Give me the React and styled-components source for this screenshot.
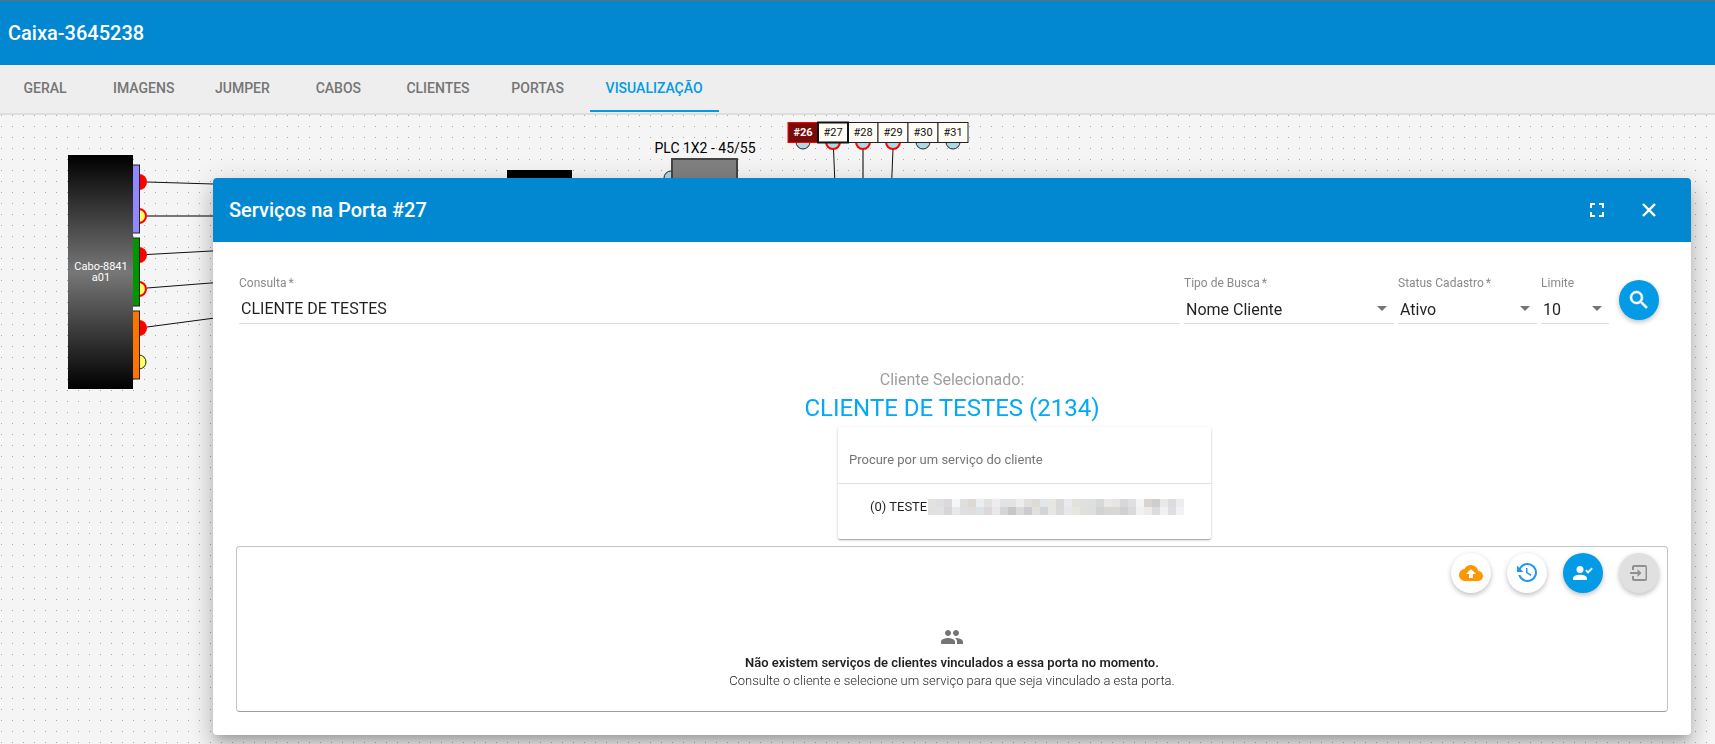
import React from "react";
import styled, { createGlobalStyle, css } from "styled-components";
import { MdCloudUpload, MdFullscreen, MdPeople } from "react-icons/md";

const GlobalStyle = createGlobalStyle`
  *, *::before, *::after { box-sizing: border-box; }
  body {
    margin: 0;
    font-family: Roboto, "Liberation Sans", sans-serif;
    color: rgba(0, 0, 0, 0.87);
    background: #f5f5f5;
  }
  button, input, select { font-family: inherit; }
`;

const Page = styled.div`
  display: flex;
  flex-direction: column;
  height: 100vh;
  overflow: hidden;
  border-top: 1px solid #6b6b6b;
`;

const Toolbar = styled.header`
  display: flex;
  align-items: center;
  flex: none;
  height: 64px;
  padding: 0 ${(p) => p.$pad}px;
  color: #fff;
  background: #0288d1;
`;

const Title = styled.h1`
  flex: 1;
  margin: 0;
  font-size: 20px;
  font-weight: 500;
  line-height: 24px;
`;

const Tabs = styled.nav`
  display: flex;
  flex: none;
  gap: 8px;
  height: 50px;
  padding: 0 1px 1px;
  background: #eee;
  border-bottom: 2px solid #dedede;
`;

const Tab = styled.button`
  min-width: 88px;
  padding: 0 16px;
  border: 0;
  border-bottom: 2px solid ${(p) => (p.$active ? "#039be5" : "transparent")};
  background: none;
  color: ${(p) => (p.$active ? "#039be5" : "#757575")};
  font-size: 14px;
  font-weight: 500;
  text-transform: uppercase;
  cursor: pointer;
`;

const Canvas = styled.main`
  flex: 1;
  min-height: 0;
  background: #f5f5f5;
`;

const Diagram = styled.svg`
  display: block;
  width: 100%;
  height: 100%;
  font-family: Roboto, "Liberation Sans", sans-serif;
`;

const Overlay = styled.div`
  position: fixed;
  inset: 0;
  display: flex;
  align-items: flex-start;
  padding: 178px 24px 9px 213px;
`;

const Dialog = styled.section`
  flex: 1;
  min-width: 0;
  overflow: hidden;
  border-radius: 4px;
  background: #fff;
  box-shadow: 0 7px 9px -4px rgba(0, 0, 0, 0.2), 0 14px 21px 2px rgba(0, 0, 0, 0.14),
    0 5px 26px 4px rgba(0, 0, 0, 0.12);
`;

const ToolbarActions = styled.div`
  display: flex;
  gap: 12px;
  padding-right: 6px;
`;

const IconButton = styled.button`
  display: grid;
  place-items: center;
  width: 40px;
  height: 40px;
  padding: 0;
  border: 0;
  background: none;
  color: #fff;
  cursor: pointer;
`;

const DialogBody = styled.div`
  padding: 32px 23px 23px;
`;

const SearchForm = styled.form`
  display: flex;
  align-items: flex-start;
  gap: 4px;
  padding: 0 9px 0 3px;
`;

const Field = styled.div`
  position: relative;
  display: flex;
  flex-direction: column;
  ${(p) => (p.$width ? css`flex: 0 0 ${p.$width}px;` : css`flex: 1;`)}
`;

const Label = styled.label`
  font-size: 12px;
  line-height: 18px;
  color: #8a8a8a;
`;

const Required = styled.span`
  margin-left: 2px;
`;

const control = css`
  width: 100%;
  height: 32px;
  border: 0;
  border-bottom: 1px solid #dedede;
  border-radius: 0;
  outline: 0;
  background: none;
  color: rgba(0, 0, 0, 0.87);
  font-size: 16px;
`;

const TextInput = styled.input`
  ${control}
  padding: 2px 2px 0;
`;

const Select = styled.select`
  ${control}
  padding: 4px 2px 0;
  appearance: none;
`;

const Arrow = styled.svg`
  position: absolute;
  right: 7px;
  bottom: 13px;
  pointer-events: none;
`;

const fabColors = {
  primary: css`background: #039be5; color: #fff;`,
  upload: css`background: #fff; color: #ff9800;`,
  history: css`background: #fff; color: #2196f3;`,
  disabled: css`background: #e0e0e0; color: #8f8f8f;`,
};

const Fab = styled.button`
  display: grid;
  place-items: center;
  flex: none;
  width: 40px;
  height: 40px;
  padding: 0;
  border: 0;
  border-radius: 50%;
  box-shadow: 0 2px 5px rgba(0, 0, 0, 0.26);
  cursor: pointer;
  ${(p) => fabColors[p.$tone]}
`;

const SearchFab = styled(Fab)`
  margin: 6px 0 0 6px;
`;

const Selected = styled.div`
  display: flex;
  flex-direction: column;
  align-items: center;
  padding-top: 45px;
`;

const SelectedLabel = styled.p`
  margin: 0;
  font-size: 16px;
  line-height: 22px;
  color: #9e9e9e;
`;

const SelectedName = styled.h2`
  margin: 0 0 2px;
  font-size: 24px;
  font-weight: 400;
  line-height: 34px;
  color: #03a9f4;
`;

const ServiceCard = styled.div`
  width: 373px;
  margin: 0 0 7px 145px;
  border-radius: 2px;
  background: #fff;
  box-shadow: 0 1px 3px rgba(0, 0, 0, 0.2), 0 1px 1px rgba(0, 0, 0, 0.14),
    0 2px 1px -1px rgba(0, 0, 0, 0.12);
`;

const ServiceFilter = styled.input`
  display: block;
  width: 100%;
  height: 57px;
  padding: 8px 11px 0;
  border: 0;
  border-bottom: 1px solid #e0e0e0;
  outline: 0;
  background: none;
  font-size: 13px;
  &::placeholder { color: #757575; }
`;

const ServiceItem = styled.button`
  display: flex;
  align-items: center;
  gap: 1px;
  width: 100%;
  height: 55px;
  padding: 0 0 10px 32px;
  border: 0;
  background: none;
  color: rgba(0, 0, 0, 0.87);
  font-size: 13px;
  cursor: pointer;
`;

const LinkedPanel = styled.section`
  height: 166px;
  padding: 6px 8px;
  border: 1px solid #c4c4c4;
  border-bottom-color: #9e9e9e;
  border-radius: 4px;
`;

const PanelActions = styled.div`
  display: flex;
  justify-content: flex-end;
  gap: 16px;
`;

const EmptyState = styled.div`
  display: flex;
  flex-direction: column;
  align-items: center;
  padding-top: 32px;
  color: #757575;
`;

const EmptyText = styled.p`
  margin: 0;
  font-size: 13px;
  line-height: 18px;
  font-weight: ${(p) => (p.$strong ? 600 : 300)};
  color: rgba(0, 0, 0, 0.87);
  padding-top: ${(p) => (p.$strong ? 5 : 0)}px;
`;

const tabs = ["Geral", "Imagens", "Jumper", "Cabos", "Clientes", "Portas", "Visualização"];

const maskRows = [
  "e2e2e2 dedee1 dcd8dc f4f6fa dedede dcd8d2 e9eeef e2e2e2 efecee e1e4e4 e2e4e2 ededed e2dfdf dedad6 e2e6ea e6e6e2 d9d9d9 e8eaf0 e2e2dc dfe1e1 dcdfdf d6d9d6 e9e9e9 e8e4e2 d7d7d9 dfdfe3 f4f4f4 d8d4d0 cecece e9e9e7 dadddb ededf0",
  "e3e0df e0e1e4 d6d6da e8e8e8 dedfe0 e0dcd9 dde2e6 dcd8d9 e8e8ea d5d5d7 c7c7c9 dadadc cfcacf e2e0da d1d5d8 e5e7e4 dadad8 e6e7eb e5e6e0 dfe0da dddfdd d1d3d1 d7d7d3 d8d8d4 cfd0d3 dadada f1f1f3 eeeae6 dedbe0 f0f0f2 dfdfe1 f1f2f5",
].map((row) => row.split(" "));

const ports = [
  { id: 26, state: "alert" },
  { id: 27, state: "selected", linked: true },
  { id: 28, linked: true },
  { id: 29, linked: true },
  { id: 30 },
  { id: 31 },
];

const tubes = [
  { y: 50, color: "#9187ff", linked: true },
  { y: 123, color: "#009600", linked: true },
  { y: 196, color: "#ff7300", linked: false },
];

function Icon({ path, size = 24, stroke = 0 }) {
  return (
    <svg
      width={size}
      height={size}
      viewBox="0 0 24 24"
      fill="currentColor"
      stroke="currentColor"
      strokeWidth={stroke}
      aria-hidden="true"
    >
      <path d={path} />
    </svg>
  );
}

const closePath = "M6 6L18 18M18 6L6 18";
const searchPath =
  "M9.5,3A6.5,6.5 0 0,1 16,9.5C16,11.11 15.41,12.59 14.44,13.73L14.71,14H15.5L20.5,19L19,20.5L14,15.5V14.71L13.73,14.44C12.59,15.41 11.11,16 9.5,16A6.5,6.5 0 0,1 3,9.5A6.5,6.5 0 0,1 9.5,3M9.5,5C7,5 5,7 5,9.5C5,12 7,14 9.5,14C12,14 14,12 14,9.5C14,7 12,5 9.5,5Z";
const historyPath =
  "M11,7V12.11L15.71,14.9L16.5,13.62L12.5,11.25V7M12.5,2C8.97,2 5.91,3.92 4.27,6.77L2,4.5V11H8.5L5.75,8.25C6.96,5.73 9.5,4 12.5,4A7.5,7.5 0 0,1 20,11.5A7.5,7.5 0 0,1 12.5,19C9.23,19 6.47,16.91 5.44,14H3.34C4.44,18.03 8.11,21 12.5,21C17.74,21 22,16.75 22,11.5A9.5,9.5 0 0,0 12.5,2Z";
const accountCheckPath =
  "M9,5A3.5,3.5 0 0,1 12.5,8.5A3.5,3.5 0 0,1 9,12A3.5,3.5 0 0,1 5.5,8.5A3.5,3.5 0 0,1 9,5M9,13.75C12.87,13.75 16,15.32 16,17.25V19H2V17.25C2,15.32 5.13,13.75 9,13.75M17,12.66L14.25,9.66L15.41,8.5L17,10.09L20.59,6.5L21.75,7.91L17,12.66Z";
const enterPath =
  "M18,4H7A2,2 0 0,0 5,6V9H7V6H18.5V18H7V15H5V18A2,2 0 0,0 7,20H18A2,2 0 0,0 20,18V6A2,2 0 0,0 18,4M10.5,16L14.5,12L10.5,8V11H3V13H10.5V16Z";

function NetworkDiagram() {
  return (
    <Diagram role="img" aria-label="Diagrama da caixa">
      <defs>
        <pattern id="dots" width="11" height="11" patternUnits="userSpaceOnUse">
          <rect x="1" y="0" width="1" height="1" fill="#a6a6a6" />
        </pattern>
        <linearGradient id="cable" x1="0" y1="0" x2="0" y2="1">
          <stop offset="0" stopColor="#000" />
          <stop offset="0.5" stopColor="#777" />
          <stop offset="1" stopColor="#000" />
        </linearGradient>
      </defs>
      <rect width="100%" height="100%" fill="url(#dots)" />

      <g stroke="#111" strokeWidth="1">
        <path d="M147 67L230 69.500" />
        <path d="M147 101H230" stroke="#777" strokeWidth="2" />
        <path d="M147 139.500L230 135" />
        <path d="M147 173L230 166.500" />
        <path d="M147 212L230 201" />
        <path d="M833.500 34L835 70" />
        <path d="M863 34V70" stroke="#777" strokeWidth="2" />
        <path d="M893 34L891.500 70" />
      </g>

      {tubes.map((t) => (
        <g key={t.y}>
          <circle cx="139" cy={t.y + 17} r="8" fill="#f00" />
          <circle
            cx="139"
            cy={t.y + 51}
            r="7"
            fill="#ffff66"
            stroke={t.linked ? "#f00" : "#222"}
            strokeWidth={t.linked ? 2 : 1}
          />
          <rect x="130.500" y={t.y} width="9" height="68" fill={t.color} stroke="#222" />
        </g>
      ))}
      <rect x="68" y="40" width="65" height="234" fill="url(#cable)" />
      <g fill="#fff" fontSize="11" textAnchor="middle">
        <text x="101" y="155">Cabo-8841</text>
        <text x="101" y="166">a01</text>
      </g>

      <rect x="507" y="55" width="65" height="60" fill="#000" />
      <circle cx="671" cy="63" r="7" fill="#add8e6" stroke="#222" />
      <rect x="672" y="44" width="65" height="60" fill="#808080" stroke="#444" strokeWidth="2" />
      <text x="705" y="38" fontSize="14" textAnchor="middle" fill="#000">
        PLC 1X2 - 45/55
      </text>

      {ports.map((p, i) => {
        const x = 788 + i * 30;
        const alert = p.state === "alert";
        return (
          <g key={p.id}>
            <circle
              cx={x + 15}
              cy="27"
              r="7"
              fill="#add8e6"
              stroke={p.linked ? "#f00" : "#222"}
              strokeWidth={p.linked ? 2 : 1}
            />
            <rect
              x={x}
              y="7.500"
              width="30"
              height="20"
              fill={alert ? "#780a0a" : "#fffcf5"}
              stroke={alert ? "#f00" : "#222"}
            />
            <text
              x={x + 15}
              y="21"
              fontSize="11"
              fontWeight={alert ? 700 : 400}
              textAnchor="middle"
              fill={alert ? "#fff" : "#111"}
            >
              #{p.id}
            </text>
          </g>
        );
      })}
      <rect x="818" y="7.500" width="30" height="20" fill="none" stroke="#111" strokeWidth="2" />
    </Diagram>
  );
}

function FieldLabel({ htmlFor, required, children }) {
  return (
    <Label htmlFor={htmlFor}>
      {children}
      {required && <Required>*</Required>}
    </Label>
  );
}

function SelectField({ id, label, required, value, width }) {
  return (
    <Field $width={width}>
      <FieldLabel htmlFor={id} required={required}>
        {label}
      </FieldLabel>
      <Select id={id} defaultValue={value}>
        <option>{value}</option>
      </Select>
      <Arrow width="10" height="5" viewBox="0 0 10 5" aria-hidden="true">
        <path d="M0 0H10L5 5Z" fill="#757575" />
      </Arrow>
    </Field>
  );
}

export default function App() {
  return (
    <>
      <GlobalStyle />
      <Page>
        <Toolbar $pad={8}>
          <Title>Caixa-3645238</Title>
        </Toolbar>
        <Tabs>
          {tabs.map((t) => (
            <Tab key={t} type="button" $active={t === "Visualização"}>
              {t}
            </Tab>
          ))}
        </Tabs>
        <Canvas>
          <NetworkDiagram />
        </Canvas>
      </Page>

      <Overlay>
        <Dialog role="dialog" aria-labelledby="dialog-title">
          <Toolbar as="div" $pad={16}>
            <Title as="h2" id="dialog-title">
              Serviços na Porta #27
            </Title>
            <ToolbarActions>
              <IconButton type="button" aria-label="Tela cheia">
                <MdFullscreen size={24} />
              </IconButton>
              <IconButton type="button" aria-label="Fechar">
                <Icon path={closePath} stroke={2.4} />
              </IconButton>
            </ToolbarActions>
          </Toolbar>

          <DialogBody>
            <SearchForm onSubmit={(e) => e.preventDefault()}>
              <Field>
                <FieldLabel htmlFor="consulta" required>
                  Consulta
                </FieldLabel>
                <TextInput id="consulta" defaultValue="CLIENTE DE TESTES" />
              </Field>
              <SelectField id="tipo" label="Tipo de Busca" required value="Nome Cliente" width={210} />
              <SelectField id="status" label="Status Cadastro" required value="Ativo" width={139} />
              <SelectField id="limite" label="Limite" value="10" width={68} />
              <SearchFab type="submit" $tone="primary" aria-label="Buscar">
                <Icon path={searchPath} stroke={0.5} />
              </SearchFab>
            </SearchForm>

            <Selected>
              <SelectedLabel>Cliente Selecionado:</SelectedLabel>
              <SelectedName>CLIENTE DE TESTES (2134)</SelectedName>
              <ServiceCard>
                <ServiceFilter
                  placeholder="Procure por um serviço do cliente"
                  aria-label="Procure por um serviço do cliente"
                />
                <ServiceItem type="button">
                  (0) TESTE
                  <svg width="256" height="16" shapeRendering="crispEdges" aria-hidden="true">
                    {maskRows.map((row, y) =>
                      row.map((c, x) => (
                        <rect key={`${x}-${y}`} x={x * 8} y={y * 8} width="8" height="8" fill={`#${c}`} />
                      ))
                    )}
                  </svg>
                </ServiceItem>
              </ServiceCard>
            </Selected>

            <LinkedPanel>
              <PanelActions>
                <Fab type="button" $tone="upload" aria-label="Enviar">
                  <MdCloudUpload size={24} />
                </Fab>
                <Fab type="button" $tone="history" aria-label="Histórico">
                  <Icon path={historyPath} />
                </Fab>
                <Fab type="button" $tone="primary" aria-label="Vincular cliente">
                  <Icon path={accountCheckPath} />
                </Fab>
                <Fab type="button" $tone="disabled" aria-label="Entrar" disabled>
                  <Icon path={enterPath} />
                </Fab>
              </PanelActions>
              <EmptyState>
                <MdPeople size={24} />
                <EmptyText $strong>Não existem serviços de clientes vinculados a essa porta no momento.</EmptyText>
                <EmptyText>Consulte o cliente e selecione um serviço para que seja vinculado a esta porta.</EmptyText>
              </EmptyState>
            </LinkedPanel>
          </DialogBody>
        </Dialog>
      </Overlay>
    </>
  );
}
